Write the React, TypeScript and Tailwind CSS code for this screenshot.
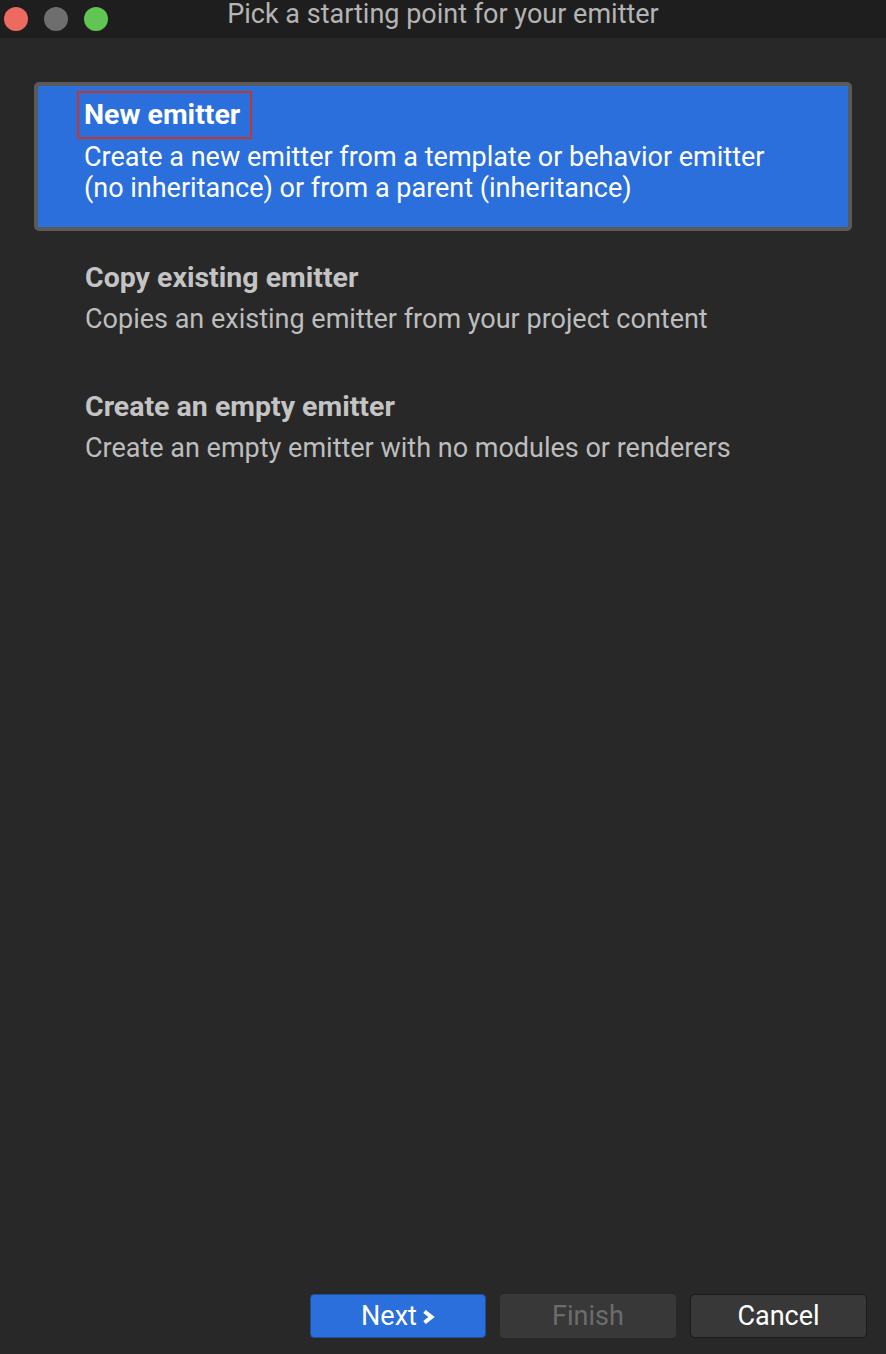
const OPTIONS = [
  {
    title: 'New emitter',
    lines: [
      'Create a new emitter from a template or behavior emitter',
      '(no inheritance) or from a parent (inheritance)',
    ],
    selected: true,
  },
  {
    title: 'Copy existing emitter',
    lines: ['Copies an existing emitter from your project content'],
    selected: false,
  },
  {
    title: 'Create an empty emitter',
    lines: ['Create an empty emitter with no modules or renderers'],
    selected: false,
  },
];

function TitleBar() {
  return (
    <div className="relative flex h-[38px] items-center bg-[#1e1e1e] pl-[4px]">
      <div className="flex gap-[16px]">
        <span className="h-[24px] w-[24px] rounded-full bg-[#ec6a5e]" />
        <span className="h-[24px] w-[24px] rounded-full bg-[#6e6e6e]" />
        <span className="h-[24px] w-[24px] rounded-full bg-[#61c554]" />
      </div>
      <div className="absolute inset-x-0 top-0 text-center text-[27px] leading-[28px] text-[#b4b4b4]">
        Pick a starting point for your emitter
      </div>
    </div>
  );
}

export default function App() {
  return (
    <div
      className="flex h-[1354px] w-[886px] flex-col bg-[#282828] text-[27px]"
      style={{ fontFamily: 'Roboto, "Liberation Sans", sans-serif' }}
    >
      <TitleBar />
      <div className="flex flex-1 flex-col px-[34px] pt-[44px]">
        {OPTIONS.map((o) =>
          o.selected ? (
            <div
              key={o.title}
              className="rounded-[5px] border-[4px] border-[#5a5a5a] bg-[#2a6fdc] pb-[23px] pl-[46px] pt-[5px]"
            >
              <div className="-ml-[7px] mb-[3px] inline-block border-[2.5px] border-[#c2392b] py-[3px] pl-[5px] pr-[10px] text-[28.5px] font-bold leading-[38px] text-white">
                {o.title}
              </div>
              {o.lines.map((l) => (
                <div key={l} className="leading-[31px] text-white">
                  {l}
                </div>
              ))}
            </div>
          ) : (
            <div key={o.title} className="pb-[20px] pl-[51px] pt-[27px]">
              <div className="text-[28.5px] font-bold leading-[40px] text-[#c4c4c4]">{o.title}</div>
              <div className="leading-[42px] text-[#bdbdbd]">{o.lines[0]}</div>
            </div>
          ),
        )}
      </div>
      <div className="flex justify-end gap-[14px] pb-[16px] pr-[19px]">
        <button className="flex h-[44px] w-[176px] items-center justify-center gap-[5px] rounded-[4px] border border-[#1f4f9c] bg-[#2a6fdc] text-[27px] text-white">
          Next
          <svg width="13" height="14" viewBox="0 0 13 14" className="mt-[2px]">
            <path d="M2.5 1.5 L9.5 7 L2.5 12.5" fill="none" stroke="white" strokeWidth="4" strokeLinejoin="miter" />
          </svg>
        </button>
        <button className="flex h-[44px] w-[176px] items-center justify-center rounded-[4px] bg-[#383838] text-[27px] text-[#6c6c6c]">
          Finish
        </button>
        <button className="flex h-[44px] w-[177px] items-center justify-center rounded-[5px] border border-[#1c1c1c] bg-[#383838] text-[27px] text-white">
          Cancel
        </button>
      </div>
    </div>
  );
}
